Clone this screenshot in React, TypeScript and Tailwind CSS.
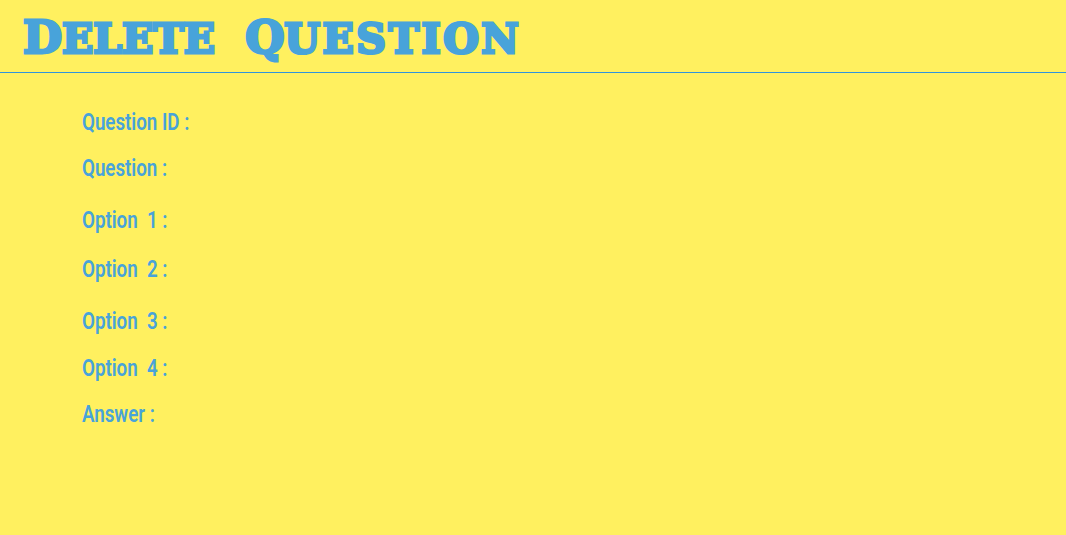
const rows = [
  { label: 'Question ID :', cls: 'h-[46px]' },
  { label: 'Question :', cls: 'h-[52px]' },
  { label: 'Option\u00a0 1 :', cls: 'h-[49px]' },
  { label: 'Option\u00a0 2 :', cls: 'h-[52px]' },
  { label: 'Option\u00a0 3 :', cls: 'h-[47px]' },
  { label: 'Option\u00a0 4 :', cls: 'h-[46px]' },
  { label: 'Answer :', cls: 'h-[46px]' },
];

export default function App() {
  return (
    <div className="min-h-[535px] bg-[#fff05f] overflow-hidden">
      <div className="h-[73px] border-b border-[#2f94dc] pl-[23px] pt-[4px] flex items-center">
        <h1 className="flex items-baseline text-[#48a3da] text-[41px] font-bold font-['DejaVu_Serif',serif] uppercase whitespace-pre [-webkit-text-stroke:3px_#48a3da]">
          <span className="text-[45px]">D</span>
          <span className="mr-[30px]">elete</span>
          <span className="text-[45px]">Q</span>
          <span className="tracking-[2.5px]">uestion</span>
        </h1>
      </div>
      <div className="pl-[82px] pt-[26px]">
        {rows.map((row) => (
          <div key={row.label} className={`${row.cls} text-[#48a3da] text-[24px] font-semibold leading-[46px] font-['Roboto',sans-serif] scale-x-[0.78] origin-left whitespace-pre`}>
            {row.label}
          </div>
        ))}
      </div>
    </div>
  );
}
